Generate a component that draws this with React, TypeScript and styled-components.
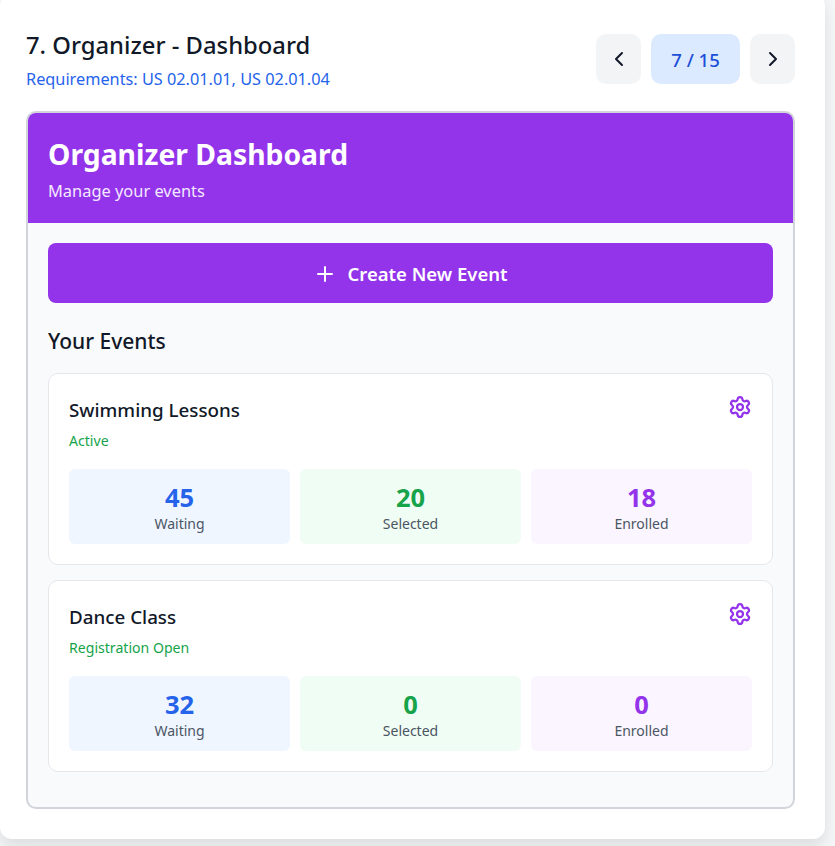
import React from "react";
import styled, { createGlobalStyle } from "styled-components";
import { ChevronLeft, ChevronRight, Plus, Settings } from "lucide-react";

const Global = createGlobalStyle`
  html, body { margin: 0; padding: 0; height: 100%; overflow: hidden; background: #f5f6f8; }
  * { box-sizing: border-box; }
  body { font-family: "Noto Sans", "Open Sans", sans-serif; }
`;

const Sheet = styled.div`
  width: 825px;
  height: 845px;
  margin-top: -6px;
  background: #fff;
  border-radius: 12px;
  box-shadow: 0 8px 16px rgba(0, 0, 0, 0.1);
  padding: 36px 30px 30px 26px;
`;

const TopBar = styled.header`
  display: flex;
  justify-content: space-between;
  align-items: flex-start;
  height: 81px;
`;

const Heading = styled.div`
  display: flex;
  flex-direction: column;
`;

const Title = styled.h1`
  margin: 0;
  font-size: 23.8px;
  line-height: 30px;
  font-weight: 500;
  color: #111827;
`;

const Req = styled.p`
  margin: 7px 0 0;
  font-size: 16.3px;
  line-height: 24px;
  color: #2563eb;
`;

const Pager = styled.nav`
  display: flex;
  gap: 10px;
  margin-top: 4px;
`;

const NavButton = styled.button`
  width: 45px;
  height: 50px;
  border: 0;
  padding: 0;
  border-radius: 10px;
  background: #f3f4f6;
  color: #111827;
  display: flex;
  align-items: center;
  justify-content: center;
`;

const PageCount = styled.div`
  width: 89px;
  height: 50px;
  border-radius: 10px;
  background: #dbeafe;
  color: #1d4ed8;
  font-size: 18.5px;
  font-weight: 500;
  display: flex;
  align-items: center;
  justify-content: center;
`;

const Frame = styled.section`
  width: 769px;
  height: 698px;
  border: 2px solid #d1d5db;
  border-radius: 10px;
  background: #f9fafb;
  overflow: hidden;
`;

const Banner = styled.div`
  height: 110px;
  background: #9333ea;
  padding: 20px 20px 0;
`;

const BannerTitle = styled.h2`
  margin: 0;
  color: #fff;
  font-size: 28.3px;
  line-height: 42px;
  font-weight: 700;
`;

const BannerSub = styled.p`
  margin: 5px 0 0;
  color: #f3e8ff;
  font-size: 16.4px;
  line-height: 22px;
`;

const Body = styled.div`
  padding: 20px;
  display: flex;
  flex-direction: column;
`;

const CreateButton = styled.button`
  height: 60px;
  border: 0;
  padding: 1px 0 0;
  border-radius: 8px;
  background: #9333ea;
  color: #fff;
  font: 600 18.5px "Noto Sans", sans-serif;
  display: flex;
  align-items: center;
  justify-content: center;
  gap: 10px;
`;

const SectionTitle = styled.h3`
  margin: 23px 0 17px;
  font-size: 21px;
  line-height: 30px;
  font-weight: 500;
  color: #111827;
`;

const EventList = styled.div`
  display: flex;
  flex-direction: column;
  gap: 15px;
`;

const EventCard = styled.article`
  height: 192px;
  background: #fff;
  border: 1px solid #e5e7eb;
  border-radius: 10px;
  padding: 20px;
  display: flex;
  flex-direction: column;
`;

const EventTop = styled.div`
  display: flex;
  justify-content: space-between;
  align-items: flex-start;
  height: 75px;
`;

const EventName = styled.h4`
  margin: 3px 0 0;
  font-size: 18.8px;
  line-height: 26px;
  font-weight: 500;
  color: #111827;
`;

const EventStatus = styled.p`
  margin: 8px 0 0;
  font-size: 14.1px;
  line-height: 20px;
  color: #16a34a;
`;

const GearButton = styled.span`
  color: #9333ea;
  display: block;
  line-height: 0;
  padding-top: 1px;
`;

const Stats = styled.div`
  display: grid;
  grid-template-columns: repeat(3, 1fr);
  gap: 10px;
`;

const Stat = styled.div<{ $bg: string; $fg: string }>`
  height: 75px;
  padding-top: 2px;
  border-radius: 6px;
  background: ${(p) => p.$bg};
  color: ${(p) => p.$fg};
  display: flex;
  flex-direction: column;
  align-items: center;
  justify-content: center;
`;

const StatValue = styled.strong`
  font-size: 25.5px;
  line-height: 33px;
  font-weight: 700;
`;

const StatLabel = styled.span`
  font-size: 14px;
  line-height: 20px;
  color: #4b5563;
`;

const tones = [
  { label: "Waiting", bg: "#eff6ff", fg: "#2563eb" },
  { label: "Selected", bg: "#f0fdf4", fg: "#16a34a" },
  { label: "Enrolled", bg: "#faf5ff", fg: "#9333ea" },
];

const events = [
  { name: "Swimming Lessons", status: "Active", values: [45, 20, 18] },
  { name: "Dance Class", status: "Registration Open", values: [32, 0, 0] },
];

export default function App() {
  return (
    <>
      <Global />
      <Sheet>
        <TopBar>
          <Heading>
            <Title>7. Organizer - Dashboard</Title>
            <Req>Requirements: US 02.01.01, US 02.01.04</Req>
          </Heading>
          <Pager>
            <NavButton aria-label="Previous"><ChevronLeft size={24} /></NavButton>
            <PageCount>7 / 15</PageCount>
            <NavButton aria-label="Next"><ChevronRight size={24} /></NavButton>
          </Pager>
        </TopBar>
        <Frame>
          <Banner>
            <BannerTitle>Organizer Dashboard</BannerTitle>
            <BannerSub>Manage your events</BannerSub>
          </Banner>
          <Body>
            <CreateButton><Plus size={24} />Create New Event</CreateButton>
            <SectionTitle>Your Events</SectionTitle>
            <EventList>
              {events.map((e) => (
                <EventCard key={e.name}>
                  <EventTop>
                    <div>
                      <EventName>{e.name}</EventName>
                      <EventStatus>{e.status}</EventStatus>
                    </div>
                    <GearButton><Settings size={24} strokeWidth={2.25} /></GearButton>
                  </EventTop>
                  <Stats>
                    {tones.map((t, i) => (
                      <Stat key={t.label} $bg={t.bg} $fg={t.fg}>
                        <StatValue>{e.values[i]}</StatValue>
                        <StatLabel>{t.label}</StatLabel>
                      </Stat>
                    ))}
                  </Stats>
                </EventCard>
              ))}
            </EventList>
          </Body>
        </Frame>
      </Sheet>
    </>
  );
}
